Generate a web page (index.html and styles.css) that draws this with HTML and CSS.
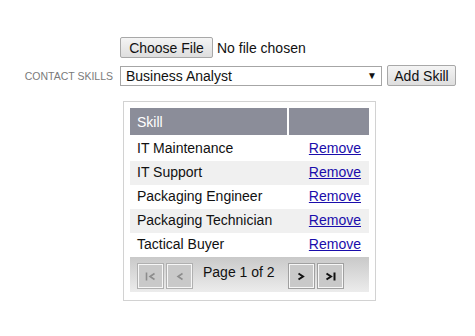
FILE: index.html
```html
<!DOCTYPE html>
<html>
<head>
<meta charset="utf-8">
<link rel="stylesheet" href="styles.css">
</head>
<body>
<div class="form">
  <div class="row row-file">
    <span class="label"></span>
    <span class="btn btn-file">Choose File</span>
    <span class="file-status">No file chosen</span>
  </div>
  <div class="row row-skill">
    <span class="label">CONTACT SKILLS</span>
    <span class="select-wrap">
      <span class="select">Business Analyst</span>
      <span class="select-arrow">&#9660;</span>
    </span>
    <span class="btn btn-add">Add Skill</span>
  </div>
  <div class="grid-box">
    <div class="grid-head">
      <div class="th th-skill">Skill</div>
      <div class="th th-action"></div>
    </div>
    <div class="grid-row"><span class="cell-skill">IT Maintenance</span><a class="remove" href="#">Remove</a></div>
    <div class="grid-row alt"><span class="cell-skill">IT Support</span><a class="remove" href="#">Remove</a></div>
    <div class="grid-row"><span class="cell-skill">Packaging Engineer</span><a class="remove" href="#">Remove</a></div>
    <div class="grid-row alt"><span class="cell-skill">Packaging Technician</span><a class="remove" href="#">Remove</a></div>
    <div class="grid-row"><span class="cell-skill">Tactical Buyer</span><a class="remove" href="#">Remove</a></div>
    <div class="pager">
      <span class="pbtn disabled">
        <svg width="11" height="9" viewBox="0 0 11 9"><path d="M1.5 0.5v8" stroke="#8c8c8c" stroke-width="1.6" fill="none"/><path d="M9.5 1.5L5 4.5l4.5 3" stroke="#8c8c8c" stroke-width="1.6" fill="none"/></svg>
      </span>
      <span class="pbtn disabled">
        <svg width="8" height="9" viewBox="0 0 8 9"><path d="M6.5 1.5L2 4.5l4.5 3" stroke="#8c8c8c" stroke-width="1.6" fill="none"/></svg>
      </span>
      <span class="page-text">Page 1 of 2</span>
      <span class="pbtn next">
        <svg width="8" height="9" viewBox="0 0 8 9"><path d="M1.5 1.5L6 4.5l-4.5 3" stroke="#111" stroke-width="2" fill="none"/></svg>
      </span>
      <span class="pbtn">
        <svg width="11" height="9" viewBox="0 0 11 9"><path d="M1.5 1.5L6 4.5l-4.5 3" stroke="#111" stroke-width="2" fill="none"/><path d="M9.5 0.5v8" stroke="#111" stroke-width="2" fill="none"/></svg>
      </span>
    </div>
  </div>
</div>
</body>
</html>
```

FILE: styles.css
```css
html, body {
  margin: 0;
  padding: 0;
  background: #fff;
}
body {
  font-family: "Liberation Sans", Arial, sans-serif;
  font-size: 14px;
  color: #111;
}
.form {
  padding-top: 37px;
}
.row {
  display: flex;
  align-items: center;
}
.label {
  width: 113px;
  margin-right: 7px;
  text-align: right;
  font-size: 10.5px;
  color: #7a7a7a;
  flex: none;
}
.row-file {
  height: 21px;
  margin-bottom: 7px;
}
.btn {
  box-sizing: border-box;
  display: inline-flex;
  align-items: center;
  justify-content: center;
  height: 21px;
  border: 1px solid #a8a8a8;
  border-radius: 2px;
  background: linear-gradient(#f4f4f4, #dedede);
  color: #111;
  font-size: 14px;
}
.btn-file {
  width: 93px;
}
.file-status {
  margin-left: 4px;
  color: #111;
}
.row-skill {
  height: 21px;
}
.select-wrap {
  position: relative;
  width: 262px;
  height: 20px;
  flex: none;
}
.select {
  box-sizing: border-box;
  display: flex;
  align-items: center;
  width: 100%;
  height: 100%;
  padding-left: 5px;
  border: 1px solid #a6a6a6;
  background: #fff;
  color: #111;
}
.select-arrow {
  position: absolute;
  right: 5px;
  top: 4px;
  font-size: 10px;
  color: #111;
}
.btn-add {
  margin-left: 5px;
  width: 69px;
}
.grid-box {
  box-sizing: border-box;
  width: 253px;
  margin: 15px 0 0 123px;
  padding: 6px 6px 8px 6px;
  border: 1px solid #d2d2d2;
}
.grid-head {
  display: grid;
  grid-template-columns: 157px 80px;
  column-gap: 2px;
  height: 27px;
  margin-bottom: 2px;
}
.th {
  background: #8b8d99;
  color: #fff;
  display: flex;
  align-items: center;
  padding-left: 7px;
}
.grid-row {
  display: flex;
  align-items: center;
  justify-content: space-between;
  height: 24px;
  padding: 0 8px 2px 7px;
  box-sizing: border-box;
  background: #fff;
}
.grid-row.alt {
  background: #f0f0f0;
}
.remove {
  color: #1a0dab;
  text-decoration: underline;
}
.pager {
  display: flex;
  align-items: flex-start;
  height: 35px;
  box-sizing: border-box;
  padding: 6px 7px 0 7px;
  background: linear-gradient(#c9c9c9, #ececec);
}
.pbtn {
  box-sizing: border-box;
  display: inline-flex;
  align-items: center;
  justify-content: center;
  width: 27px;
  height: 26px;
  margin-right: 2px;
  border: 1px solid #a0a0a0;
  box-shadow: inset 0 0 0 1px #f7f7f7;
  background: #c9c9c9;
}
.pbtn.disabled {
  border-color: #b0b0b0;
}
.page-text {
  margin: 0 13px 0 8px;
  line-height: 18px;
  color: #111;
}
```
